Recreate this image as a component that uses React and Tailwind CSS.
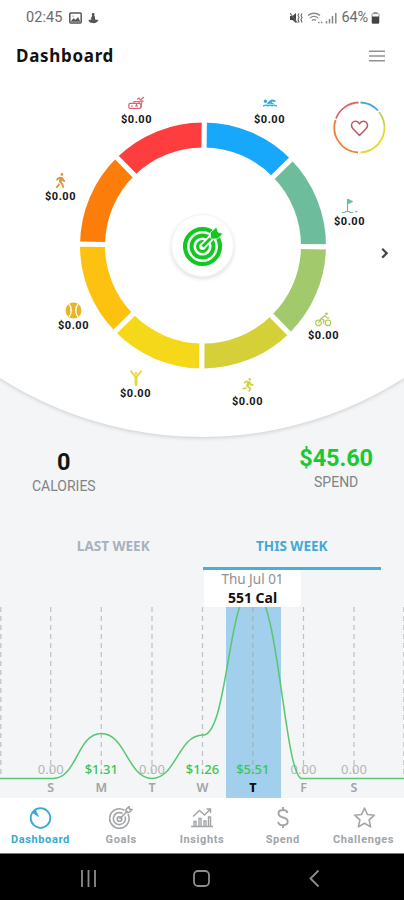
import React, { useState } from 'react';
import { FaWalking, FaRunning, FaSwimmer } from 'react-icons/fa';

const CX = 203;
const CY = 165.5;
const RADIUS = 110.5;

const segments = [
    { start: 0, color: '#18a8fb' },
    { start: 45, color: '#6dbd9d' },
    { start: 90, color: '#a2c96b' },
    { start: 135, color: '#d5d037' },
    { start: 180, color: '#f6d81b' },
    { start: 225, color: '#fdc210' },
    { start: 270, color: '#fd7d0b' },
    { start: 315, color: '#fd3d3e' },
];

const point = (deg, r) => {
    const a = ((deg - 89.4) * Math.PI) / 180;
    return `${(CX + r * Math.cos(a)).toFixed(2)} ${(CY + r * Math.sin(a)).toFixed(2)}`;
};

const TreadmillIcon = () => (
    <svg width="17" height="14" viewBox="0 0 17 14" fill="none" stroke="#df6377" strokeWidth="1.2">
        <rect x="0.8" y="7.4" width="12" height="5" rx="1.5" />
        <path d="M3 10h2M7 10h3M12.8 12.4 14 4.5M9 3.5l2-1.5 1.5 2L16 1M6 7.2V5.5h4.5l1 2M8.5 9.5v-2" />
        <path d="M11 5.2h4.5" />
    </svg>
);

const GolfIcon = () => (
    <svg width="18" height="17" viewBox="0 0 18 17" fill="none" stroke="#6dbd9d" strokeWidth="1.2">
        <path d="M6.5 14V1" />
        <path d="M7 1 12 3.500 7 6Z" fill="#6dbd9d" strokeWidth="0.5" />
        <path d="M1 14.500h3.500M8.500 14.500H12M4 13.500h5" />
        <circle cx="15.2" cy="13.5" r="1" fill="#6dbd9d" stroke="none" />
    </svg>
);

const BikeIcon = () => (
    <svg width="17" height="15" viewBox="0 0 17 15" fill="none" stroke="#a8c84a" strokeWidth="1.1">
        <circle cx="3.5" cy="10.8" r="2.8" />
        <circle cx="13" cy="10.8" r="2.8" />
        <path d="M3.5 10.8 6 6.5l3 1.700-.8 3.500M6 6.500 10 3.500l2 2.500h2.500" />
        <circle cx="11.5" cy="1.8" r="1.3" fill="#a8c84a" stroke="none" />
    </svg>
);

const BaseballIcon = () => (
    <svg width="17" height="17" viewBox="0 0 17 17">
        <circle cx="8.5" cy="8.5" r="8" fill="#eab426" />
        <path d="M4 2c3 3.500 3 9.500 0 13M13 2c-3 3.500-3 9.500 0 13" fill="none" stroke="#fff" strokeWidth="1.2" />
        <path d="M5 8.500h2.200M9.800 8.500H12" stroke="#fff" strokeWidth="0.7" />
    </svg>
);

const YogaIcon = () => (
    <svg width="14" height="16" viewBox="0 0 14 16" fill="none" stroke="#e6d53a" strokeLinecap="round">
        <path d="M2 1.300 6 6.500M12 1.300 8 6.500" strokeWidth="1.8" />
        <path d="M7 7v7.500" strokeWidth="2.8" />
        <circle cx="7" cy="3.4" r="1.3" fill="#e6d53a" stroke="none" />
    </svg>
);

const activities = [
    { name: 'gym', pos: 'left-[106px] top-[15px]', icon: <TreadmillIcon /> },
    { name: 'swim', pos: 'left-[239px] top-[15px]', icon: <FaSwimmer size={14} color="#36afd5" /> },
    { name: 'golf', pos: 'left-[319px] top-[117px]', icon: <GolfIcon /> },
    { name: 'bike', pos: 'left-[293px] top-[231px]', icon: <BikeIcon /> },
    { name: 'run', pos: 'left-[217px] top-[297px]', icon: <FaRunning size={14} color="#cfd33c" /> },
    { name: 'yoga', pos: 'left-[105px] top-[289px]', icon: <YogaIcon /> },
    { name: 'ball', pos: 'left-[43px] top-[221px]', icon: <BaseballIcon /> },
    { name: 'walk', pos: 'left-[30px] top-[92px]', icon: <FaWalking size={15} color="#dd9440" /> },
];

const days = [
    { day: 'S', value: '0.00', x: 50.7 },
    { day: 'M', value: '$1.31', x: 101.3 },
    { day: 'T', value: '0.00', x: 152 },
    { day: 'W', value: '$1.26', x: 202.5 },
    { day: 'T', value: '$5.51', x: 252.8, active: true },
    { day: 'F', value: '0.00', x: 303.5 },
    { day: 'S', value: '0.00', x: 354 },
];

const StatusBar = () => (
    <div className="flex h-[35px] items-center justify-between pr-[24px] pl-[26px] font-['Roboto',sans-serif] text-[14.5px] text-[#6b6b6b]">
        <div className="flex items-center gap-[6px]">
            <span className="tracking-[0.1px]">02:45</span>
            <svg width="13" height="12" viewBox="0 0 13 12" fill="none" stroke="#555" strokeWidth="1.5">
                <rect x="0.8" y="1" width="11.4" height="10" rx="1" />
                <path d="M2 9.500 4.500 6.500l2 1.500 2.500-2.500 2 4z" fill="#555" strokeWidth="0.5" />
                <circle cx="4" cy="4" r="0.6" fill="#555" stroke="none" />
            </svg>
            <svg width="11" height="12" viewBox="0 0 11 12" fill="#555">
                <path d="M4.500 1C6.500.500 7 2 6.200 3.500 7.500 5 7 6.500 7 7.500l3.500.5C9.500 10.500 7 11.500 4.500 11 2.500 11 .500 10 .500 8l3-.5C2.500 6 3.500 5 4.200 4 3.500 2.500 3.800 1.500 4.500 1z" />
            </svg>
        </div>
        <div className="flex items-center">
            <svg width="13" height="12" viewBox="0 0 13 12" fill="#444">
                <path d="M0 4h2.500L6 1v10L2.500 8H0z" />
                <path d="M0 1 7.500 11M9 1.500l-1 2 1 2-1 2 1 3M12 1.500l-1 2 1 2-1 2 1 3" stroke="#666" strokeWidth="1.1" fill="none" />
            </svg>
            <svg className="ml-[4px]" width="16" height="12" viewBox="0 0 16 12" fill="none" stroke="#8a8a8a" strokeWidth="1.4">
                <path d="M1 3.500c3.500-3 8.500-3 12 0M3 6c2.500-2 5.500-2 8 0M5 8.300c1.500-1 2.500-1 4 0" />
                <path d="M11 10.500h1.500M14 10.500h1.500" />
            </svg>
            <svg className="ml-[2px]" width="12" height="12" viewBox="0 0 12 12" stroke="#888" strokeWidth="1.5">
                <path d="M1.500 11.500V9M4.500 11.500V7M7.500 11.500V4M10.800 11.500V1" />
            </svg>
            <span className="ml-[4px] tracking-[-0.1px]">64%</span>
            <svg className="ml-[3px]" width="9" height="12" viewBox="0 0 9 12" fill="#444">
                <rect x="2.5" y="0" width="4" height="2" fill="#999" />
                <rect x="1" y="1.7" width="7" height="9.5" rx="1" fill="none" stroke="#999" />
                <rect x="1" y="4.5" width="7" height="7" />
            </svg>
        </div>
    </div>
);

const ActivityWheel = () => (
    <div className="relative h-[356px] w-[404px]">
        <svg width="404" height="356" viewBox="0 0 404 356" fill="none">
            {segments.map((s) => (
                <path
                    key={s.start}
                    d={`M${point(s.start, RADIUS)} A${RADIUS} ${RADIUS} 0 0 1 ${point(s.start + 45, RADIUS)}`}
                    stroke={s.color}
                    strokeWidth="25"
                />
            ))}
            {segments.map((s) => (
                <path key={s.start} d={`M${point(s.start, 96)} L${point(s.start, 126)}`} stroke="#fff" strokeWidth="5.2" />
            ))}
        </svg>

        {activities.map((a) => (
            <div key={a.name} className={`absolute flex w-[61px] flex-col items-center ${a.pos}`}>
                <div className="flex h-[18px] items-start pt-px">{a.icon}</div>
                <span className="font-['Roboto',sans-serif] text-[11px] leading-[13px] font-bold tracking-[0.5px] text-[#161616]">$0.00</span>
            </div>
        ))}

        <button className="absolute top-[134px] left-[171px] flex size-[63px] items-center justify-center rounded-full border border-[#f4f4f4] bg-white shadow-[0_2px_4px_rgba(0,0,0,0.13)]">
            <svg width="42" height="42" viewBox="0 0 42 42" fill="none" stroke="#10c81e">
                <circle cx="20.5" cy="21.5" r="17.5" strokeWidth="4.2" />
                <circle cx="20.5" cy="21.5" r="11" strokeWidth="3.9" />
                <circle cx="20.5" cy="21.5" r="4.9" strokeWidth="3.1" />
                <path d="M20.500 21.500 36 6" stroke="#fff" strokeWidth="6.5" />
                <path d="M20.500 21.500 33 9" strokeWidth="2.8" />
                <path d="M28.500 13V7.500L34.500 2l1.500 5 5 1.500L35.500 14h-6z" fill="#10c81e" stroke="#fff" strokeWidth="0.8" />
            </svg>
        </button>

        <button className="absolute top-[21px] left-[333px]">
            <svg width="53" height="53" viewBox="0 0 53 53" fill="none">
                <g strokeWidth="1.8">
                    <path d="M27.500 1.500A25 25 0 0 1 45 9.500" stroke="#42a8dc" />
                    <path d="M46 11A25 25 0 0 1 51.300 24" stroke="#c3cf50" />
                    <path d="M51.300 24A25 25 0 0 1 27.500 51.500" stroke="#e3da30" />
                    <path d="M25 51.500A25 25 0 0 1 2.500 19" stroke="#ee7e38" />
                    <path d="M3 17.500A25 25 0 0 1 25.500 1.500" stroke="#dd6466" />
                </g>
                <path d="M26.500 34.500 19.800 27.500c-2.300-2.400-1.500-6.300 1.500-7.100 2-.5 4 .300 5.200 2.500 1.200-2.200 3.200-3 5.200-2.500 3 .8 3.800 4.700 1.500 7.100z" stroke="#b95968" strokeWidth="1.5" strokeLinejoin="round" />
            </svg>
        </button>

        <button className="absolute top-[167px] left-[380px]">
            <svg width="10" height="12" viewBox="0 0 10 12" fill="none" stroke="#444" strokeWidth="2.2">
                <path d="m2.200 1.800 4.500 4.400-4.500 4.400" />
            </svg>
        </button>
    </div>
);

const WeekChart = () => (
    <svg width="404" height="191" viewBox="0 607 404 191" className="block font-['Noto_Sans',sans-serif]">
        <rect x="226" y="607" width="55" height="191" fill="#a1cfec" />
        {[0.8, ...days.map((d) => d.x), 403.8].map((x) => (
            <line key={x} x1={x} x2={x} y1="607" y2="778" stroke="#9a9da1" strokeOpacity="0.6" strokeWidth="1.2" strokeDasharray="5 4" />
        ))}
        {days.map((d) => (
            <g key={d.x} textAnchor="middle">
                <text
                    x={d.x}
                    y="774"
                    fontSize="13"
                    fontWeight={d.value === '0.00' ? 400 : 500}
                    fill={d.value === '0.00' ? '#b4b6b8' : '#3cc552'}
                >
                    {d.value}
                </text>
                <text x={d.x} y="791.5" fontSize="12.5" fontWeight={d.active ? 800 : 600} fill={d.active ? '#0b0b0b' : '#a2a4a6'}>
                    {d.day}
                </text>
            </g>
        ))}
        <path
            d="M0 778.500H53C77 778.500 77 733.500 101.300 733.500S128 778.500 152 778.500 178 735 203 735C228 735 228 589 253 589C278 589 284 770 301 778.500H404"
            fill="none"
            stroke="#57c871"
            strokeWidth="1.5"
        />
    </svg>
);

const navItems = [
    {
        label: 'Dashboard',
        icon: (
            <>
                <circle cx="12.5" cy="12" r="9.8" strokeWidth="1.8" />
                <path d="M4.500 6.500 10.500 10.500 7.500 4z" fill="currentColor" strokeWidth="0.8" />
            </>
        ),
    },
    {
        label: 'Goals',
        icon: (
            <>
                <path d="M15.500 4.300a9.700 9.700 0 1 0 3.500 3.800M13.500 7.500a6 6 0 1 0 2.500 3" />
                <circle cx="10.5" cy="13" r="2.3" />
                <path d="m10.500 13 8-8M17 6.500V3.500L20 .5l.5 2.500 2.500.5-3 3z" />
            </>
        ),
    },
    {
        label: 'Insights',
        icon: <path strokeWidth="1.4" d="M1 20.500h22M4 20v-4.500h2V20M9 20v-7.500h2V20M14 20v-5h2v5M18.500 20v-9h2v9M3 10.500l6.500-6 5 4.500L20 3.500M16.500 3h4v4" />,
    },
    {
        label: 'Spend',
        icon: <path strokeWidth="1.9" d="M16.500 7c-.5-2-2-3-4.500-3S7.500 5.300 7.500 7.500 9 10.700 12 11.500s4.700 1.700 4.700 4-2 3.700-4.700 3.700-4.500-1.200-4.900-3.400M12 1v3M12 19.200V22" />,
    },
    {
        label: 'Challenges',
        icon: <path strokeLinejoin="round" d="m12.500 2 2.900 6.500 7 .7-5.300 4.700 1.500 7-6.100-3.600-6.100 3.600 1.500-7L2.600 9.200l7-.7z" />,
    },
];

const App = () => {
    const [active, setActive] = useState('Dashboard');
    const [week, setWeek] = useState('THIS WEEK');

    return (
        <div className="flex h-[900px] w-[404px] flex-col overflow-hidden bg-[#f3f5f7] font-['Noto_Sans',sans-serif]">
            <div className="flex h-[445px] shrink-0 justify-center overflow-hidden">
                <div className="flex h-[437px] w-[750px] shrink-0 justify-center rounded-b-[375px] bg-white shadow-[0_1px_4px_rgba(0,0,0,0.17)]">
                    <div className="w-[404px]">
                        <StatusBar />
                        <header className="flex h-[45px] items-center justify-between pr-[19px] pb-[4px] pl-[16px]">
                            <h1 className="text-[17px] font-bold tracking-[0.7px] text-[#121212]">Dashboard</h1>
                            <svg width="16" height="12" viewBox="0 0 16 12" stroke="#929292" strokeWidth="1.5">
                                <path d="M0 1.200h16M0 6h16M0 10.800h16" />
                            </svg>
                        </header>
                        <ActivityWheel />
                    </div>
                </div>
            </div>

            <div className="flex h-[85px] shrink-0 justify-between pr-[31px] pl-[32px] text-center font-['Roboto',sans-serif]">
                <div className="pt-[3px]">
                    <p className="text-[23.5px] leading-[28px] font-bold text-[#151515]">0</p>
                    <p className="pt-px text-[14px] leading-[18px] text-[#818386]">CALORIES</p>
                </div>
                <div>
                    <p className="text-[23.5px] leading-[26px] font-bold tracking-[-0.1px] text-[#1ac931]">$45.60</p>
                    <p className="pt-[2px] text-[14px] leading-[18px] text-[#818386]">SPEND</p>
                </div>
            </div>

            <div className="grid h-[40px] shrink-0 grid-cols-2 pr-[23px] pl-[24px]">
                {['LAST WEEK', 'THIS WEEK'].map((label) => (
                    <button
                        key={label}
                        onClick={() => setWeek(label)}
                        className={`border-b-[3px] pb-[4px] text-[13.5px] font-bold ${week === label ? 'border-[#4aaeda] text-[#42aad8]' : 'border-transparent text-[#aab0bd]'}`}
                    >
                        {label}
                    </button>
                ))}
            </div>

            <div className="ml-[204px] h-[37px] w-[97px] shrink-0 rounded-[3px] bg-white text-center">
                <p className="text-[13.5px] leading-[19px] text-[#919191]">Thu Jul 01</p>
                <p className="text-[14px] leading-[17px] font-bold text-[#111]">551 Cal</p>
            </div>
            <div className="h-[191px] shrink-0">
                <WeekChart />
            </div>

            <nav className="grid h-[55px] shrink-0 grid-cols-5 bg-white">
                {navItems.map((item) => (
                    <button
                        key={item.label}
                        onClick={() => setActive(item.label)}
                        className={`flex flex-col items-center pt-[8px] ${active === item.label ? 'text-[#35a9d3]' : 'text-[#a2a5a8]'}`}
                    >
                        <svg width="24" height="24" viewBox="0 0 24 24" fill="none" stroke="currentColor" strokeWidth="1.6">
                            {item.icon}
                        </svg>
                        <span className="pt-[3px] font-['Roboto',sans-serif] text-[11px] leading-[14px] font-bold tracking-[0.6px]">{item.label}</span>
                    </button>
                ))}
            </nav>

            <div className="flex h-[47px] shrink-0 items-center border-t border-[#777] bg-black">
                <svg width="404" height="46" viewBox="0 0 404 46" fill="none" stroke="#8d8d8d" strokeWidth="1.8">
                    <path d="M82 16v17M88.500 16v17M95 16v17" />
                    <rect x="194" y="17" width="15" height="15" rx="4" />
                    <path d="m318.500 16.500-8 8 8 8" />
                </svg>
            </div>
        </div>
    );
};

export default App;
